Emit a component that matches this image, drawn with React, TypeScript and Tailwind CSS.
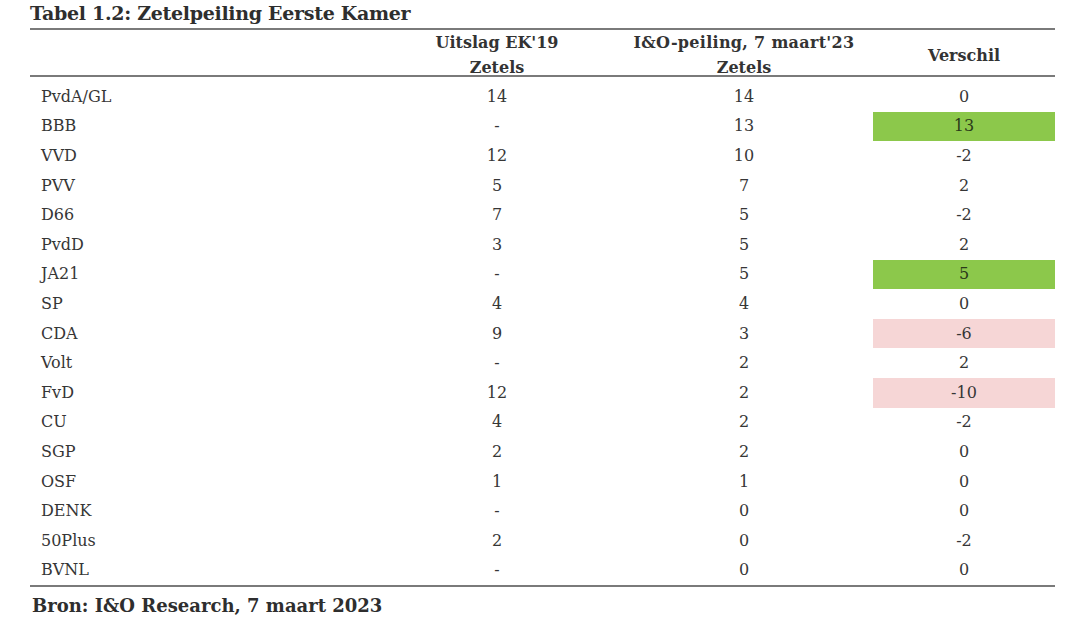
import React from 'react'

type Row = {
    party: string
    ek19: string
    io: string
    diff: string
    tone?: 'up' | 'down'
}

const rows: Row[] = [
    { party: 'PvdA/GL', ek19: '14', io: '14', diff: '0' },
    { party: 'BBB', ek19: '-', io: '13', diff: '13', tone: 'up' },
    { party: 'VVD', ek19: '12', io: '10', diff: '-2' },
    { party: 'PVV', ek19: '5', io: '7', diff: '2' },
    { party: 'D66', ek19: '7', io: '5', diff: '-2' },
    { party: 'PvdD', ek19: '3', io: '5', diff: '2' },
    { party: 'JA21', ek19: '-', io: '5', diff: '5', tone: 'up' },
    { party: 'SP', ek19: '4', io: '4', diff: '0' },
    { party: 'CDA', ek19: '9', io: '3', diff: '-6', tone: 'down' },
    { party: 'Volt', ek19: '-', io: '2', diff: '2' },
    { party: 'FvD', ek19: '12', io: '2', diff: '-10', tone: 'down' },
    { party: 'CU', ek19: '4', io: '2', diff: '-2' },
    { party: 'SGP', ek19: '2', io: '2', diff: '0' },
    { party: 'OSF', ek19: '1', io: '1', diff: '0' },
    { party: 'DENK', ek19: '-', io: '0', diff: '0' },
    { party: '50Plus', ek19: '2', io: '0', diff: '-2' },
    { party: 'BVNL', ek19: '-', io: '0', diff: '0' },
]

const serif = { fontFamily: '"DejaVu Serif", "Liberation Serif", serif' }

export default function App() {
    return (
        <div className="w-[1080px] h-[621px] bg-white text-[#363636] overflow-hidden" style={serif}>
            <div className="pl-[30px] w-[1055px]">
                <h1 className="h-[28px] pt-[1px] text-[19px] leading-[24px] font-bold text-[#2e2e2e] tracking-[-0.3px]">
                    Tabel 1.2: Zetelpeiling Eerste Kamer
                </h1>

                {/* header */}
                <div className="grid grid-cols-[345px_244px_250px_186px] h-[49px] border-y-2 border-[#7a7a7a] text-[16px] leading-[25px] font-bold text-[#333]">
                    <div />
                    <div className="flex flex-col items-center justify-center pb-[1px]">
                        <span>Uitslag EK'19</span>
                        <span>Zetels</span>
                    </div>
                    <div className="flex flex-col items-center justify-center pb-[1px]">
                        <span className="tracking-[0.3px]">I&amp;O-peiling, 7 maart'23</span>
                        <span>Zetels</span>
                    </div>
                    <div className="flex items-center justify-center pl-1">Verschil</div>
                </div>

                {/* body */}
                <div className="pt-[5px] border-b-2 border-[#7a7a7a] text-[16px]">
                    {rows.map(r => (
                        <div key={r.party} className="grid grid-cols-[345px_244px_250px_186px] h-[29.6px] items-stretch">
                            <div className="pl-[11px] flex items-center">{r.party}</div>
                            <div className="flex items-center justify-center">{r.ek19}</div>
                            <div className="flex items-center justify-center">{r.io}</div>
                            <div className="pl-1 flex">
                                <div
                                    className={
                                        'flex-1 flex items-center justify-center ' +
                                        (r.tone === 'up' ? 'bg-[#8cc84b] text-[#2a3a1a]' : r.tone === 'down' ? 'bg-[#f6d6d6]' : '')
                                    }
                                >
                                    {r.diff}
                                </div>
                            </div>
                        </div>
                    ))}
                </div>

                <p className="pt-[7px] pl-[2px] text-[18px] leading-[24px] font-bold text-[#2e2e2e]">
                    Bron: I&amp;O Research, 7 maart 2023
                </p>
            </div>
        </div>
    )
}
